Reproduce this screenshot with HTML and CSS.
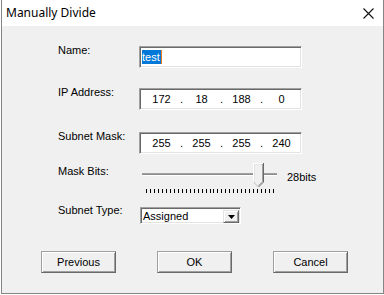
FILE: index.html
```html
<!DOCTYPE html>
<html lang="en">

<head>
    <meta charset="UTF-8">
    <meta name="viewport" content="width=device-width, initial-scale=1.0">
    <title>Manually Divide</title>
    <link rel="stylesheet" href="styles.css">
</head>

<body>
    <div class="dialog">
        <div class="titlebar">
            <span class="title">Manually Divide</span>
            <svg class="close" width="11" height="11" viewBox="0 0 11 11">
                <path d="M0.5 0.5 L10.5 10.5 M10.5 0.5 L0.5 10.5" stroke="#111" stroke-width="1.1" fill="none" />
            </svg>
        </div>

        <div class="content">
            <div class="row row-name">
                <label>Name:</label>
                <div class="field">
                    <span class="selected">test</span><span class="caret"></span>
                </div>
            </div>

            <div class="row row-ip">
                <label>IP Address:</label>
                <div class="field ip-field">
                    <span class="octet">172</span><span class="dot">.</span>
                    <span class="octet">18</span><span class="dot">.</span>
                    <span class="octet">188</span><span class="dot">.</span>
                    <span class="octet">0</span>
                </div>
            </div>

            <div class="row row-mask">
                <label>Subnet Mask:</label>
                <div class="field ip-field">
                    <span class="octet">255</span><span class="dot">.</span>
                    <span class="octet">255</span><span class="dot">.</span>
                    <span class="octet">255</span><span class="dot">.</span>
                    <span class="octet">240</span>
                </div>
            </div>

            <div class="row row-bits">
                <label class="label-bits">Mask Bits:</label>
                <div class="slider">
                    <div class="slider-area">
                        <div class="track"></div>
                        <svg class="thumb" width="11" height="25" viewBox="0 0 11 25">
                            <path d="M0 0 H11 V19 L5.5 24.5 L0 19 Z" fill="#f0f0f0" />
                            <path d="M0.5 19 V0.5 H10" stroke="#ffffff" fill="none" />
                            <path d="M1.5 19 V1.5 H9.5" stroke="#e3e3e3" fill="none" />
                            <path d="M10.5 0 V19 L5.5 24" stroke="#696969" fill="none" />
                            <path d="M9.5 1 V18.6 L5.5 22.6" stroke="#a0a0a0" fill="none" />
                            <path d="M0.5 19 L5.5 24" stroke="#bdbdbd" fill="none" />
                        </svg>
                        <div class="ticks" id="ticks"></div>
                    </div>
                    <span class="bits">28bits</span>
                </div>
            </div>

            <div class="row row-type">
                <label class="label-type">Subnet Type:</label>
                <div class="select">
                    <span class="select-value">Assigned</span>
                    <span class="select-btn">
                        <svg width="7" height="4" viewBox="0 0 7 4">
                            <path d="M0 0 H7 L3.5 4 Z" fill="#000" />
                        </svg>
                    </span>
                </div>
            </div>
        </div>

        <div class="buttons">
            <button type="button">Previous</button>
            <button type="button">OK</button>
            <button type="button">Cancel</button>
        </div>
    </div>

    <script>
        const ticks = document.getElementById("ticks");
        for (let i = 0; i <= 32; i++) {
            const tick = document.createElement("span");
            tick.className = "tick";
            ticks.appendChild(tick);
        }
    </script>
</body>

</html>
```

FILE: styles.css
```css
body {
    margin: 0;
    background-color: #ffffff;
    font-family: "Liberation Sans", Arial, sans-serif;
    font-size: 11px;
    color: #000000;
}

.dialog {
    box-sizing: border-box;
    width: 383px;
    height: 294px;
    margin-left: 1px;
    border: 1px solid #858585;
    border-top: none;
    background-color: #f0f0f0;
    display: flex;
    flex-direction: column;
}

.titlebar {
    height: 26px;
    background-color: #ffffff;
    display: flex;
    align-items: center;
    justify-content: space-between;
    padding: 0 9px 0 4px;
}

.title {
    font-family: "Noto Sans", sans-serif;
    font-size: 12px;
    line-height: 26px;
}

.close {
    display: block;
    margin-top: 1px;
}

.content {
    padding: 20px 0 0 56px;
    display: flex;
    flex-direction: column;
}

.row {
    display: grid;
    grid-template-columns: 81px auto;
    align-items: start;
}

.row label {
    line-height: 13px;
    margin-top: -2px;
}

.row-ip {
    margin-top: 20px;
}

.row-mask {
    margin-top: 22px;
}

.row-bits {
    margin-top: 9px;
}

.row-type {
    margin-top: 13px;
}

.row .label-bits {
    margin-top: 2px;
}

.row .label-type {
    margin-top: -3px;
}

.field {
    box-sizing: border-box;
    width: 163px;
    height: 22px;
    background-color: #ffffff;
    border: 1px solid;
    border-color: #a0a0a0 #ffffff #ffffff #a0a0a0;
    box-shadow: inset 1px 1px #696969, inset -1px -1px #e3e3e3;
    padding: 2px 0 0 2px;
    display: flex;
    align-items: flex-start;
}

.selected {
    background-color: #0078d7;
    color: #ffffff;
    line-height: 14px;
    padding: 0 1px 0 0;
    margin-top: 1px;
}

.caret {
    width: 1px;
    height: 14px;
    margin-top: 1px;
    background-color: #e87a1c;
}

.ip-field {
    padding: 0 0 0 4px;
}

.octet {
    width: 35px;
    text-align: center;
    line-height: 16px;
    margin-top: 2px;
}

.dot {
    width: 5px;
    text-align: center;
    line-height: 16px;
    margin-top: 2px;
}

.slider {
    display: flex;
    align-items: flex-start;
    margin-left: 3px;
}

.slider-area {
    position: relative;
    width: 135px;
    height: 31px;
}

.track {
    margin-top: 10px;
    height: 1px;
    background-color: #8c8c8c;
    border-top: 1px solid #a0a0a0;
    border-bottom: 1px solid #ffffff;
}

.thumb {
    position: absolute;
    left: 111px;
    top: 0;
}

.ticks {
    width: 128px;
    height: 4px;
    margin: 13px 0 0 4px;
    display: flex;
    justify-content: space-between;
}

.tick {
    width: 1px;
    height: 4px;
    background-color: #000000;
}

.bits {
    margin: 8px 0 0 10px;
    line-height: 13px;
}

.select {
    box-sizing: border-box;
    width: 101px;
    height: 17px;
    margin-left: 1px;
    background-color: #ffffff;
    border: 1px solid;
    border-color: #a0a0a0 #ffffff #ffffff #a0a0a0;
    box-shadow: inset 1px 1px #696969, inset -1px -1px #e3e3e3;
    padding: 1px 1px 1px 2px;
    display: flex;
    justify-content: space-between;
}

.select-value {
    line-height: 13px;
    padding-top: 1px;
}

.select-btn {
    box-sizing: border-box;
    width: 16px;
    height: 13px;
    margin: 1px 0 0 0;
    background-color: #f0f0f0;
    border: 1px solid;
    border-color: #e3e3e3 #696969 #696969 #e3e3e3;
    box-shadow: inset 1px 1px #ffffff, inset -1px -1px #a0a0a0;
    display: flex;
    align-items: center;
    justify-content: center;
}

.select-btn svg {
    display: block;
}

.buttons {
    display: flex;
    gap: 41px;
    padding: 27px 0 0 39px;
}

button {
    box-sizing: border-box;
    width: 75px;
    height: 22px;
    padding: 0;
    background-color: #f0f0f0;
    border: 1px solid;
    border-color: #a0a0a0 #696969 #696969 #a0a0a0;
    box-shadow: inset 1px 1px #ffffff, inset -1px -1px #a0a0a0;
    font-family: "Liberation Sans", Arial, sans-serif;
    font-size: 11px;
    line-height: 16px;
    color: #000000;
}
```
